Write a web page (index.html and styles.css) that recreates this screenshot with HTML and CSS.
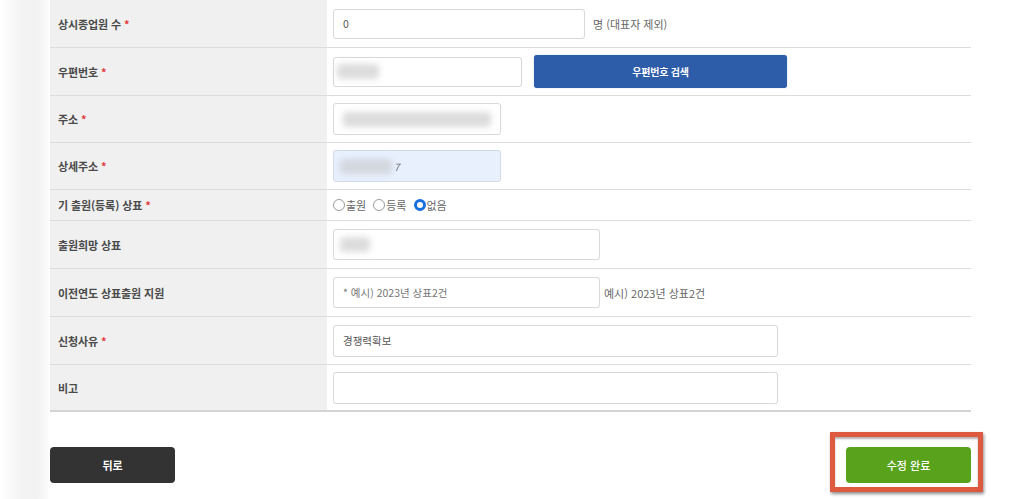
FILE: index.html
```html
<!DOCTYPE html>
<html lang="ko">
<head>
<meta charset="utf-8">
<title>수정</title>
<link rel="stylesheet" href="styles.css">
</head>
<body>
<div class="page">
  <div class="form-table">
    <div class="row h47">
      <div class="th">상시종업원 수 <span class="req">*</span></div>
      <div class="td"><div class="inp short w252">0</div><span class="unit">명 (대표자 제외)</span></div>
    </div>
    <div class="row h47">
      <div class="th">우편번호 <span class="req">*</span></div>
      <div class="td"><div class="inp short w189 pl3"><span class="blur b44"></span></div><button class="btn-zip">우편번호 검색</button></div>
    </div>
    <div class="row h46">
      <div class="th">주소 <span class="req">*</span></div>
      <div class="td"><div class="inp tall w168"><span class="blur b154"></span></div></div>
    </div>
    <div class="row h46">
      <div class="th">상세주소 <span class="req">*</span></div>
      <div class="td"><div class="inp tall w168 auto pl6"><span class="blur b54"></span><span class="seven">7</span></div></div>
    </div>
    <div class="row h30">
      <div class="th">기 출원(등록) 상표 <span class="req">*</span></div>
      <div class="td">
        <div class="radios">
          <span class="radio"><span class="circle"></span>출원</span>
          <span class="radio"><span class="circle"></span>등록</span>
          <span class="radio"><span class="circle on"></span>없음</span>
        </div>
      </div>
    </div>
    <div class="row h47">
      <div class="th">출원희망 상표</div>
      <div class="td"><div class="inp w267 pl4"><span class="blur b34"></span></div></div>
    </div>
    <div class="row h47">
      <div class="th">이전연도 상표출원 지원</div>
      <div class="td"><div class="inp w267 ph">* 예시) 2023년 상표2건</div><span class="unit near">예시) 2023년 상표2건</span></div>
    </div>
    <div class="row h47">
      <div class="th">신청사유 <span class="req">*</span></div>
      <div class="td"><div class="inp tall w445">경쟁력확보</div></div>
    </div>
    <div class="row h45 last">
      <div class="th">비고</div>
      <div class="td"><div class="inp tall w445"></div></div>
    </div>
  </div>
  <div class="actions">
    <button class="btn btn-back">뒤로</button>
    <div class="mark">
      <button class="btn btn-submit">수정 완료</button>
      <span class="annot"></span>
    </div>
  </div>
</div>
</body>
</html>
```

FILE: styles.css
```css
html, body {
  margin: 0;
  padding: 0;
}
body {
  font-family: "Noto Sans CJK KR", "Noto Sans", sans-serif;
  background-color: #fff;
  background-image: linear-gradient(to right, #fff 0, #fbfbfb 8px, #f2f2f2 24px, #f3f3f3 38px, #fafafa 46px, #fff 50px);
  background-size: 50px 100%;
  background-repeat: no-repeat;
  min-height: 499px;
  overflow: hidden;
}
.page {
  padding-left: 50px;
  width: 921px;
}
.row {
  display: grid;
  grid-template-columns: 277px 1fr;
  border-bottom: 1px solid #dcdcdc;
}
.row.last {
  border-bottom: 2px solid #d4d4d4;
}
.h47 { height: 47px; }
.h46 { height: 46px; }
.h45 { height: 45px; }
.h30 { height: 30px; }
.th {
  background: #f0f0f0;
  display: flex;
  align-items: center;
  padding-left: 8px;
  font-size: 11px;
  font-weight: 700;
  color: #4a4a4a;
  letter-spacing: -0.1px;
  white-space: pre;
}
.req {
  color: #e23b3b;
}
.td {
  display: flex;
  align-items: center;
  padding-left: 6px;
  background: #fff;
}
.inp {
  box-sizing: border-box;
  height: 31px;
  border: 1px solid #d9d9d9;
  border-radius: 3px;
  background: #fff;
  padding: 0 9px;
  font-size: 10.5px;
  color: #555;
  display: flex;
  align-items: center;
  box-shadow: 0 0 1px rgba(0,0,0,0.05);
}
.inp.short { height: 30px; }
.inp.tall { height: 32px; }
.inp.auto { background: #e8f0fe; border-color: #d3dbe6; }
.inp.ph { color: #777; }
.inp.pl3 { padding-left: 3px; }
.inp.pl4 { padding-left: 6px; }
.inp.pl6 { padding-left: 6px; }
.w252 { width: 252px; }
.w189 { width: 189px; }
.w168 { width: 168px; }
.w267 { width: 267px; }
.w445 { width: 445px; }
.blur {
  display: block;
  height: 15px;
  background: #dcdcdc;
  border-radius: 4px;
  filter: blur(3px);
}
.b44 { width: 42px; }
.b154 { width: 150px; }
.b54 { width: 52px; background: #d3d7de; }
.b34 { width: 30px; }
.seven {
  font-size: 10px;
  color: #666;
  font-style: italic;
  margin-left: 2px;
  filter: blur(0.4px);
}
.unit {
  margin-left: 8px;
  font-size: 11px;
  color: #666;
}
.unit.near { margin-left: 4px; }
.btn-zip {
  margin-left: 12px;
  width: 253px;
  height: 33px;
  border: none;
  border-radius: 3px;
  background: #2d5ca8;
  color: #fff;
  font-family: inherit;
  font-size: 10px;
  font-weight: 700;
  letter-spacing: -0.2px;
  box-shadow: 0 0 1px rgba(30,80,150,0.6);
}
.radios {
  display: flex;
  align-items: center;
  font-size: 11px;
  color: #666;
}
.radio {
  display: flex;
  align-items: center;
  margin-right: 7px;
}
.circle {
  display: block;
  box-sizing: border-box;
  width: 12px;
  height: 12px;
  border: 1px solid #9a9a9a;
  border-radius: 50%;
  margin-right: 1px;
  background: #fff;
}
.circle.on {
  border: 3.5px solid #1a6fe0;
}
.actions {
  display: flex;
  justify-content: space-between;
  align-items: flex-start;
  margin-top: 35px;
}
.btn {
  width: 125px;
  height: 36px;
  border: none;
  border-radius: 4px;
  color: #fff;
  font-family: inherit;
  font-size: 11px;
}
.btn-back {
  background: #333;
  font-weight: 700;
}
.mark {
  position: relative;
}
.btn-submit {
  background: #58a21c;
  font-weight: 500;
}
.annot {
  position: absolute;
  left: -16px;
  top: -15px;
  width: 153px;
  height: 60px;
  box-sizing: border-box;
  border: 5px solid #dd5a40;
  box-shadow: 1px 2px 3px rgba(0,0,0,0.45), inset 0 2px 2px rgba(0,0,0,0.3);
  pointer-events: none;
}
```
